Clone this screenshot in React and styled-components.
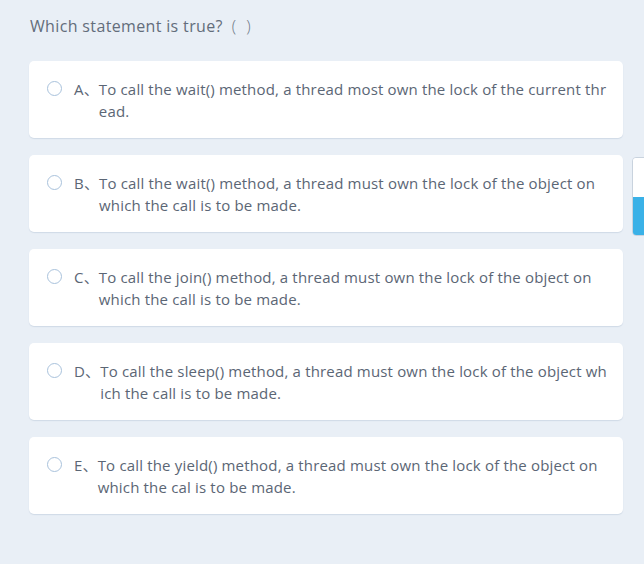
import React from 'react'
import styled, { createGlobalStyle } from 'styled-components'

const GlobalStyle = createGlobalStyle`
  html, body {
    margin: 0;
    padding: 0;
    background: #e9eff6;
  }
  body {
    font-family: "Open Sans", "Noto Sans CJK SC", sans-serif;
    overflow: hidden;
  }
`;

const Page = styled.div`
  min-height: 564px;
  padding: 15px 21px 0 29px;
  box-sizing: border-box;
`;

const Question = styled.div`
  font-size: 16px;
  line-height: 22px;
  letter-spacing: 0.35px;
  color: #636d7b;
  padding-left: 1px;
  margin-bottom: 24px;
`;

const Paren = styled.span`
  margin-left: 9px;
  letter-spacing: 3px;
  font-weight: 300;
  color: #6f7987;
`;

const List = styled.div`
  display: flex;
  flex-direction: column;
  gap: 17px;
`;

const Card = styled.label`
  display: flex;
  align-items: flex-start;
  background: #ffffff;
  border-radius: 5px;
  box-shadow: 0 1px 1px rgba(160, 180, 200, 0.35);
  padding: 17px 16px 16px 18px;
  min-height: 44px;
  cursor: pointer;
`;

const Radio = styled.span`
  flex: none;
  width: 13px;
  height: 13px;
  margin-top: 3px;
  margin-right: 12px;
  border: 1.6px solid #a9c2dc;
  border-radius: 50%;
`;

const Letter = styled.span`
  flex: none;
  font-size: 15px;
  line-height: 22px;
  letter-spacing: 0.17px;
  color: #5b6675;
`;

const Text = styled.span`
  flex: 1;
  font-size: 15px;
  line-height: 22px;
  letter-spacing: 0.17px;
  color: #5b6675;
  word-break: break-all;
`;

const SideTab = styled.div`
  position: fixed;
  left: 632px;
  top: 157px;
  width: 30px;
  height: 79px;
  border-radius: 4px;
  overflow: hidden;
  border: 1px solid #c9d3de;
  box-sizing: border-box;
  display: flex;
  flex-direction: column;
`;

const TabTop = styled.div`
  height: 39px;
  background: #ffffff;
`;

const TabBottom = styled.div`
  flex: 1;
  background: #3ab1e7;
`;

const options = [
  { key: 'A', text: 'To call the wait() method, a thread most own the lock of the current thread.' },
  { key: 'B', text: 'To call the wait() method, a thread must own the lock of the object on which the call is to be made.' },
  { key: 'C', text: 'To call the join() method, a thread must own the lock of the object on which the call is to be made.' },
  { key: 'D', text: 'To call the sleep() method, a thread must own the lock of the object which the call is to be made.' },
  { key: 'E', text: 'To call the yield() method, a thread must own the lock of the object on which the cal is to be made.' },
]

const App = () => {
  return (
    <Page>
      <GlobalStyle />
      <Question>
        Which statement is true?<Paren>( )</Paren>
      </Question>
      <List>
        {options.map((o) => (
          <Card key={o.key}>
            <Radio />
            <Letter>{o.key}、</Letter>
            <Text>{o.text}</Text>
          </Card>
        ))}
      </List>
      <SideTab>
        <TabTop />
        <TabBottom />
      </SideTab>
    </Page>
  )
}

export default App
